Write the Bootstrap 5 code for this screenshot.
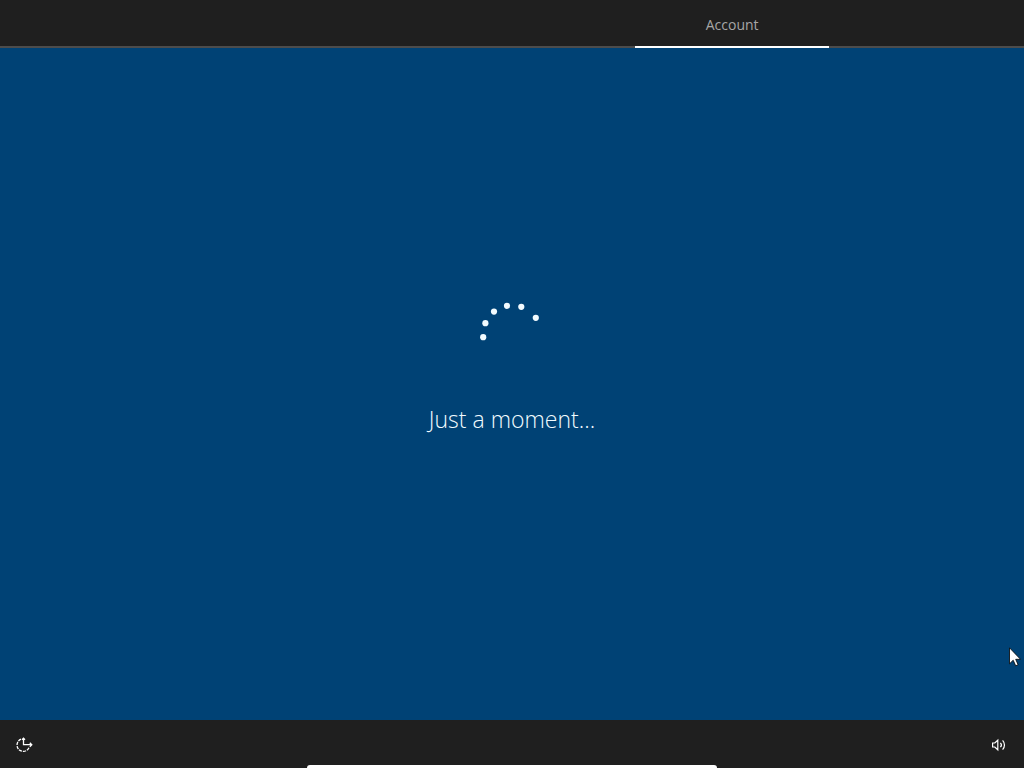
<!DOCTYPE html>
<html lang="en">
<head>
<meta charset="utf-8">
<meta name="viewport" content="width=device-width, initial-scale=1">
<title>Account setup</title>
<link href="https://cdn.jsdelivr.net/npm/bootstrap@5.3.0/dist/css/bootstrap.min.css" rel="stylesheet">
<style>
  body { background: #004275; color: #fff; font-family: "Open Sans", "Noto Sans", sans-serif; }
  .setup-bar { background: #1f1f1f; height: 48px; }
  .setup-top { border-bottom: 2px solid #4c4c4c; }
  .setup-step { width: 19%; margin-right: 19%; height: 48px; padding-top: 4px; border-bottom: 2px solid #fff; color: #a6a6a6; font-size: 14px; line-height: 20px; }
  .stage { padding-bottom: 32px; }
  .moment { font-size: 23px; line-height: 32px; font-weight: 300; color: #f2fbff; margin-top: 58px; }
  .setup-foot { padding-top: 2px; }
  .tool-btn { color: #fff; line-height: 0; }
  .tray-sheet { left: 30%; right: 30%; bottom: 0; height: 3px; background: #fff; border-radius: 6px 6px 0 0; }
  .pointer { right: 3px; bottom: 101px; }
</style>
</head>
<body class="vh-100 d-flex flex-column overflow-hidden position-relative">
<header class="setup-bar setup-top d-flex justify-content-end">
  <div class="setup-step d-flex align-items-center justify-content-center">Account</div>
</header>
<main class="stage flex-grow-1 d-flex flex-column align-items-center justify-content-center" role="status">
  <svg width="64" height="44" viewBox="0 0 64 44" fill="#f2fbff" aria-hidden="true">
    <circle cx="3.2" cy="36.2" r="3.1"/><circle cx="5.4" cy="22.2" r="3.1"/><circle cx="14" cy="10.6" r="3.1"/>
    <circle cx="27" cy="4.8" r="3.1"/><circle cx="41.3" cy="5.8" r="3.1"/><circle cx="55.8" cy="16.8" r="3.1"/>
  </svg>
  <p class="moment mb-0">Just a moment...</p>
</main>
<footer class="setup-bar setup-foot d-flex align-items-center justify-content-between px-3">
  <button class="tool-btn btn p-0 border-0" type="button" aria-label="Ease of Access">
    <svg width="18" height="18" viewBox="0 0 18 18" fill="none" stroke="#fff" stroke-width="1.3">
      <path d="M5 3.2A6.3 6.3 0 1 0 13 11.8" stroke-dasharray="3.2 1"/>
      <path d="M7.5 9.3V2.2M6 3.7l1.5-1.5L9 3.7M7.5 8.7H16M13.8 6.7l2 2-2 2"/>
    </svg>
  </button>
  <button class="tool-btn btn p-0 border-0" type="button" aria-label="Volume">
    <svg width="18" height="18" viewBox="0 0 18 18" fill="none" stroke="#fff" stroke-width="1.2">
      <path d="M2.6 7h2.2l3-2.8v9.6l-3-2.8H2.6z"/>
      <path d="M10.4 6.8a3.2 3.2 0 0 1 0 4.4"/>
      <path d="M12.6 4.4a6.6 6.6 0 0 1 0 9.2"/>
    </svg>
  </button>
</footer>
<div class="tray-sheet position-absolute"></div>
<svg class="pointer position-absolute" width="12" height="20" viewBox="0 0 12 20" aria-hidden="true">
  <path d="M.5.8v16l3.7-3.6 2.5 5.6 2.4-1.1-2.4-5.4h4.8z" fill="#fff" stroke="#000" stroke-width=".8"/>
</svg>
<script src="https://cdn.jsdelivr.net/npm/bootstrap@5.3.0/dist/js/bootstrap.bundle.min.js"></script>
</body>
</html>
